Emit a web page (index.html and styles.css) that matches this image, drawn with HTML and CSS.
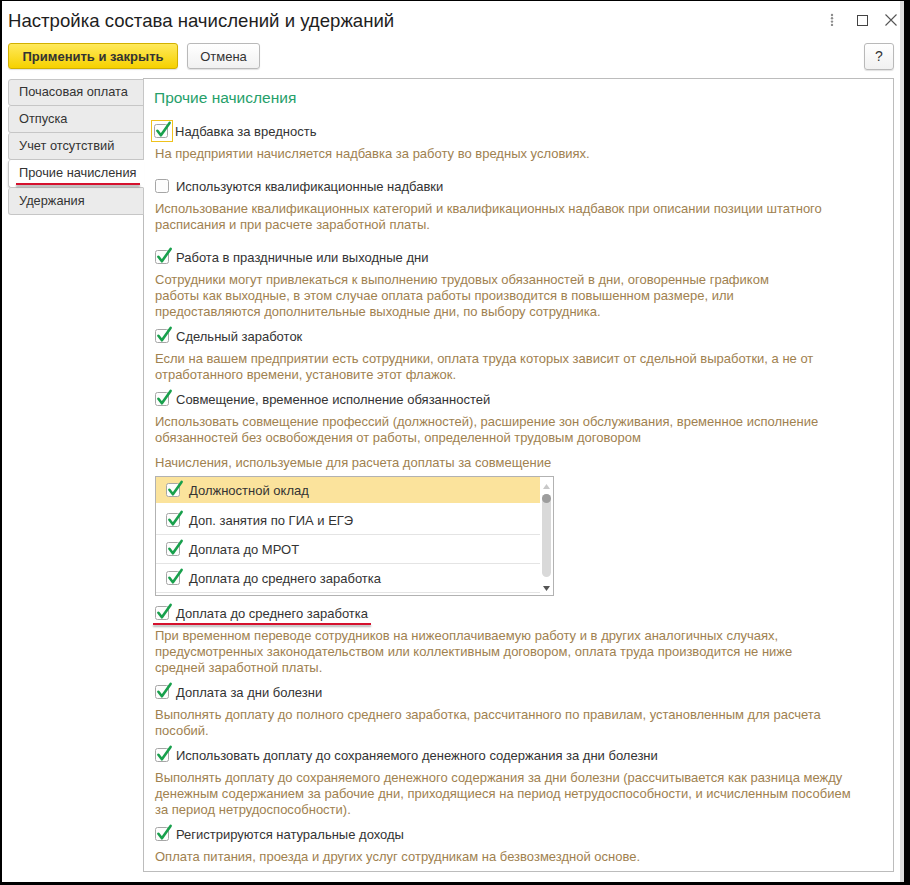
FILE: index.html
```html
<!DOCTYPE html>
<html lang="ru">
<head>
<meta charset="utf-8">
<title>Настройка состава начислений и удержаний</title>
<link rel="stylesheet" href="styles.css">
</head>
<body>
<div class="window">
  <header class="titlebar">
    <h1 class="title">Настройка состава начислений и удержаний</h1>
    <div class="win-ctrls">
      <span class="ctrl ctrl-dots"><svg width="4" height="14" viewBox="0 0 4 14"><circle cx="2" cy="2" r="1.2"/><circle cx="2" cy="5.3" r="1.2"/><circle cx="2" cy="8.6" r="1.2"/><circle cx="2" cy="11.9" r="1.2"/></svg></span>
      <span class="ctrl ctrl-max"><svg width="11" height="11" viewBox="0 0 11 11"><rect x="0.5" y="0.5" width="10" height="10" fill="none" stroke="#444" stroke-width="1"/></svg></span>
      <span class="ctrl ctrl-close"><svg width="12" height="12" viewBox="0 0 12 12"><path d="M0.5 0.5 L11.5 11.5 M11.5 0.5 L0.5 11.5" stroke="#555" stroke-width="1.1" fill="none"/></svg></span>
    </div>
  </header>

  <div class="toolbar">
    <button class="btn btn-primary">Применить и закрыть</button>
    <button class="btn btn-cancel">Отмена</button>
    <span class="spacer"></span>
    <button class="btn btn-help">?</button>
  </div>

  <div class="main">
    <nav class="tabs">
      <div class="tab">Почасовая оплата</div>
      <div class="tab">Отпуска</div>
      <div class="tab">Учет отсутствий</div>
      <div class="tab tab-active"><span class="marked">Прочие начисления</span></div>
      <div class="tab">Удержания</div>
    </nav>

    <section class="panel">
      <h2 class="group-title">Прочие начисления</h2>

      <div class="item item-wide">
        <label class="check-row"><span class="cb cb-focus"><svg class="cb-svg" width="17" height="17" viewBox="0 0 17 17"><rect class="box" x="0.5" y="2.5" width="13" height="13" rx="2"/><path class="tick" d="M3.4 8.8 L6.9 13.3 L15.6 0.9"/></svg></span><span class="lbl">Надбавка за вредность</span></label>
        <p class="desc">На предприятии начисляется надбавка за работу во вредных условиях.</p>
      </div>

      <div class="item item-wide">
        <label class="check-row"><span class="cb"><svg class="cb-svg" width="17" height="17" viewBox="0 0 17 17"><rect class="box" x="0.5" y="2.5" width="13" height="13" rx="2"/></svg></span><span class="lbl">Используются квалификационные надбавки</span></label>
        <p class="desc">Использование квалификационных категорий и квалификационных надбавок при описании позиции штатного<br>расписания и при расчете заработной платы.</p>
      </div>

      <div class="item">
        <label class="check-row"><span class="cb"><svg class="cb-svg" width="17" height="17" viewBox="0 0 17 17"><rect class="box" x="0.5" y="2.5" width="13" height="13" rx="2"/><path class="tick" d="M3.4 8.8 L6.9 13.3 L15.6 0.9"/></svg></span><span class="lbl">Работа в праздничные или выходные дни</span></label>
        <p class="desc">Сотрудники могут привлекаться к выполнению трудовых обязанностей в дни, оговоренные графиком<br>работы как выходные, в этом случае оплата работы производится в повышенном размере, или<br>предоставляются дополнительные выходные дни, по выбору сотрудника.</p>
      </div>

      <div class="item">
        <label class="check-row"><span class="cb"><svg class="cb-svg" width="17" height="17" viewBox="0 0 17 17"><rect class="box" x="0.5" y="2.5" width="13" height="13" rx="2"/><path class="tick" d="M3.4 8.8 L6.9 13.3 L15.6 0.9"/></svg></span><span class="lbl">Сдельный заработок</span></label>
        <p class="desc">Если на вашем предприятии есть сотрудники, оплата труда которых зависит от сдельной выработки, а не от<br>отработанного времени, установите этот флажок.</p>
      </div>

      <div class="item">
        <label class="check-row"><span class="cb"><svg class="cb-svg" width="17" height="17" viewBox="0 0 17 17"><rect class="box" x="0.5" y="2.5" width="13" height="13" rx="2"/><path class="tick" d="M3.4 8.8 L6.9 13.3 L15.6 0.9"/></svg></span><span class="lbl">Совмещение, временное исполнение обязанностей</span></label>
        <p class="desc">Использовать совмещение профессий (должностей), расширение зон обслуживания, временное исполнение<br>обязанностей без освобождения от работы, определенной трудовым договором</p>
      </div>

      <div class="list-caption">Начисления, используемые для расчета доплаты за совмещение</div>
      <div class="list">
        <div class="list-rows">
          <div class="list-row list-row-current"><span class="cb"><svg class="cb-svg" width="17" height="17" viewBox="0 0 17 17"><rect class="box" x="0.5" y="2.5" width="13" height="13" rx="2"/><path class="tick" d="M3.4 8.8 L6.9 13.3 L15.6 0.9"/></svg></span><span class="row-text">Должностной оклад</span></div>
          <div class="list-row"><span class="cb"><svg class="cb-svg" width="17" height="17" viewBox="0 0 17 17"><rect class="box" x="0.5" y="2.5" width="13" height="13" rx="2"/><path class="tick" d="M3.4 8.8 L6.9 13.3 L15.6 0.9"/></svg></span><span class="row-text">Доп. занятия по ГИА и ЕГЭ</span></div>
          <div class="list-row"><span class="cb"><svg class="cb-svg" width="17" height="17" viewBox="0 0 17 17"><rect class="box" x="0.5" y="2.5" width="13" height="13" rx="2"/><path class="tick" d="M3.4 8.8 L6.9 13.3 L15.6 0.9"/></svg></span><span class="row-text">Доплата до МРОТ</span></div>
          <div class="list-row"><span class="cb"><svg class="cb-svg" width="17" height="17" viewBox="0 0 17 17"><rect class="box" x="0.5" y="2.5" width="13" height="13" rx="2"/><path class="tick" d="M3.4 8.8 L6.9 13.3 L15.6 0.9"/></svg></span><span class="row-text">Доплата до среднего заработка</span></div>
        </div>
        <div class="scrollbar">
          <svg class="arrow" width="7" height="5" viewBox="0 0 7 5"><path d="M0 5 L3.5 0 L7 5 Z" fill="#c8c8c8"/></svg>
          <div class="track"><div class="thumb"></div></div>
          <svg class="arrow" width="7" height="5" viewBox="0 0 7 5"><path d="M0 0 L7 0 L3.5 5 Z" fill="#555"/></svg>
        </div>
      </div>

      <div class="item item-after-list">
        <label class="check-row"><span class="cb"><svg class="cb-svg" width="17" height="17" viewBox="0 0 17 17"><rect class="box" x="0.5" y="2.5" width="13" height="13" rx="2"/><path class="tick" d="M3.4 8.8 L6.9 13.3 L15.6 0.9"/></svg></span><span class="lbl">Доплата до среднего заработка</span><span class="underline-mark"></span></label>
        <p class="desc">При временном переводе сотрудников на нижеоплачиваемую работу и в других аналогичных случаях,<br>предусмотренных законодательством или коллективным договором, оплата труда производится не ниже<br>средней заработной платы.</p>
      </div>

      <div class="item">
        <label class="check-row"><span class="cb"><svg class="cb-svg" width="17" height="17" viewBox="0 0 17 17"><rect class="box" x="0.5" y="2.5" width="13" height="13" rx="2"/><path class="tick" d="M3.4 8.8 L6.9 13.3 L15.6 0.9"/></svg></span><span class="lbl">Доплата за дни болезни</span></label>
        <p class="desc">Выполнять доплату до полного среднего заработка, рассчитанного по правилам, установленным для расчета<br>пособий.</p>
      </div>

      <div class="item">
        <label class="check-row"><span class="cb"><svg class="cb-svg" width="17" height="17" viewBox="0 0 17 17"><rect class="box" x="0.5" y="2.5" width="13" height="13" rx="2"/><path class="tick" d="M3.4 8.8 L6.9 13.3 L15.6 0.9"/></svg></span><span class="lbl">Использовать доплату до сохраняемого денежного содержания за дни болезни</span></label>
        <p class="desc">Выполнять доплату до сохраняемого денежного содержания за дни болезни (рассчитывается как разница между<br>денежным содержанием за рабочие дни, приходящиеся на период нетрудоспособности, и исчисленным пособием<br>за период нетрудоспособности).</p>
      </div>

      <div class="item">
        <label class="check-row"><span class="cb"><svg class="cb-svg" width="17" height="17" viewBox="0 0 17 17"><rect class="box" x="0.5" y="2.5" width="13" height="13" rx="2"/><path class="tick" d="M3.4 8.8 L6.9 13.3 L15.6 0.9"/></svg></span><span class="lbl">Регистрируются натуральные доходы</span></label>
        <p class="desc">Оплата питания, проезда и других услуг сотрудникам на безвозмездной основе.</p>
      </div>
    </section>
  </div>
</div>
</body>
</html>
```

FILE: styles.css
```css
html, body {
  margin: 0;
  padding: 0;
  height: 885px;
  background: #000;
  overflow: hidden;
}

body {
  font-family: "Liberation Sans", Arial, sans-serif;
  font-size: 13px;
  color: #333;
  display: flex;
  flex-direction: column;
}

.window {
  margin: 1px 6px 3px 2px;
  flex: 1;
  background: #fff;
  border-right: 4px solid #dcdcdc;
  padding: 0 6px 0 6px;
  display: flex;
  flex-direction: column;
  min-height: 0;
}

/* title bar */
.titlebar {
  height: 38px;
  display: flex;
  align-items: center;
  justify-content: space-between;
}

.title {
  margin: 0;
  font-size: 18.6px;
  font-weight: normal;
  color: #1e1e1e;
  line-height: 22px;
  padding-top: 1px;
}

.win-ctrls {
  display: flex;
  align-items: center;
  margin-right: -6px;
}

.ctrl {
  height: 20px;
  display: flex;
  align-items: center;
  justify-content: center;
}

.ctrl-dots {
  width: 6px;
  margin-right: 21px;
}

.ctrl-dots svg circle {
  fill: #8c8c8c;
}

.ctrl-max {
  width: 12px;
  margin-right: 14px;
}

.ctrl-close {
  width: 18px;
}

/* toolbar */
.toolbar {
  display: flex;
  align-items: center;
  gap: 9px;
  height: 30px;
  padding-top: 2px;
}

.spacer {
  flex: 1;
}

.btn {
  font-family: "Liberation Sans", Arial, sans-serif;
  font-size: 13px;
  color: #333;
  height: 26px;
  border-radius: 3px;
  padding: 0 13px;
  border: 1px solid #b9b9b9;
  background: linear-gradient(#ffffff, #f1f1f1);
  box-shadow: 0 1px 1px rgba(0, 0, 0, 0.12);
  cursor: default;
}

.btn-primary {
  width: 170px;
  font-weight: bold;
  border-color: #d2b000;
  background: linear-gradient(#ffe95c, #f6d100);
}

.btn-cancel {
  width: 73px;
  padding: 0;
}

.btn-help {
  width: 30px;
  height: 27px;
  padding: 0;
  font-size: 14px;
}

/* main area */
.main {
  flex: 1;
  display: flex;
  margin-top: 7px;
  margin-bottom: 10px;
  min-height: 0;
}

.tabs {
  width: 136px;
  flex: none;
  margin-right: -1px;
  padding-top: 1px;
  position: relative;
  z-index: 1;
}

.tab {
  height: 26px;
  line-height: 26px;
  padding-left: 10px;
  border: 1px solid #c6c6c6;
  border-top: none;
  border-radius: 3px 0 0 3px;
  background: #ebebeb;
  color: #333;
  white-space: nowrap;
  font-size: 12.8px;
}

.tab:first-child {
  border-top: 1px solid #c6c6c6;
  height: 25px;
  line-height: 24px;
}

.tab-active {
  background: #fff;
  border-right-color: #fff;
  box-shadow: -1px 1px 2px rgba(0, 0, 0, 0.08);
  padding-left: 8px;
  height: 27px;
}

.marked {
  position: relative;
  padding: 0 2px;
}

.marked::after {
  content: "";
  position: absolute;
  left: -1px;
  right: -2px;
  bottom: -5px;
  height: 2px;
  background: #d5112e;
  box-shadow: 0 2px 2px rgba(0, 0, 0, 0.35);
}

.panel {
  flex: 1;
  border: 1px solid #bcbcbc;
  padding: 9px 10px 6px 11px;
  min-width: 0;
}

.group-title {
  margin: 0 0 12px -1px;
  font-size: 15.5px;
  font-weight: normal;
  line-height: 20px;
  color: #26a06a;
}

.item {
  margin-bottom: 5px;
}

.item-wide {
  margin-bottom: 13px;
}

.check-row {
  display: flex;
  align-items: center;
  height: 22px;
  position: relative;
  width: max-content;
}

.cb {
  width: 17px;
  height: 17px;
  flex: none;
  display: block;
  position: relative;
  top: -1px;
}

.cb-svg {
  display: block;
  overflow: visible;
}

.cb-svg .box {
  fill: #fdfdfd;
  stroke: #a6a6a6;
  stroke-width: 1;
}

.cb-svg .tick {
  fill: none;
  stroke: #18a04c;
  stroke-width: 2.6;
  stroke-linecap: round;
  stroke-linejoin: round;
}

.cb-focus {
  outline: 1px solid #efc21c;
  outline-offset: 0px;
  width: 20px;
  height: 20px;
  margin-left: -3px;
  top: 0;
}

.cb-focus .cb-svg {
  transform: translate(2px, 1px);
}

.cb-focus + .lbl {
  margin-left: 3px;
}

.lbl {
  margin-left: 4px;
  color: #333;
  white-space: nowrap;
}

.desc {
  margin: 4px 0 0 0;
  line-height: 16px;
  color: #a0814f;
  white-space: nowrap;
}

.underline-mark {
  position: absolute;
  left: -2px;
  right: -3px;
  bottom: -1px;
  height: 2px;
  background: #d5112e;
  box-shadow: 0 2px 2px rgba(0, 0, 0, 0.3);
}

/* list */
.list-caption {
  line-height: 16px;
  color: #a0814f;
  margin-top: 9px;
}

.list {
  margin-top: 5px;
  width: 397px;
  height: 118px;
  border: 1px solid #b2b2b2;
  display: flex;
  overflow: hidden;
}

.list-rows {
  flex: 1;
}

.list-row {
  height: 28px;
  border-bottom: 1px solid #e4e4e4;
  display: flex;
  align-items: center;
  padding-left: 10px;
}

.list-row-current {
  background: #fbe39c;
  border-bottom-color: #fff;
  height: 26px;
  margin-bottom: 2px;
}

.row-text {
  margin-left: 6px;
  color: #333;
}

.scrollbar {
  width: 13px;
  display: flex;
  flex-direction: column;
  align-items: center;
  padding: 7px 0 4px;
  gap: 5px;
}

.track {
  flex: 1;
  width: 9px;
  background: #d9d9d9;
  border-radius: 5px;
  margin-bottom: 4px;
}

.thumb {
  width: 9px;
  height: 9px;
  border-radius: 50%;
  background: #9d9d9d;
}

.item-after-list {
  margin-top: 6px;
}
```
